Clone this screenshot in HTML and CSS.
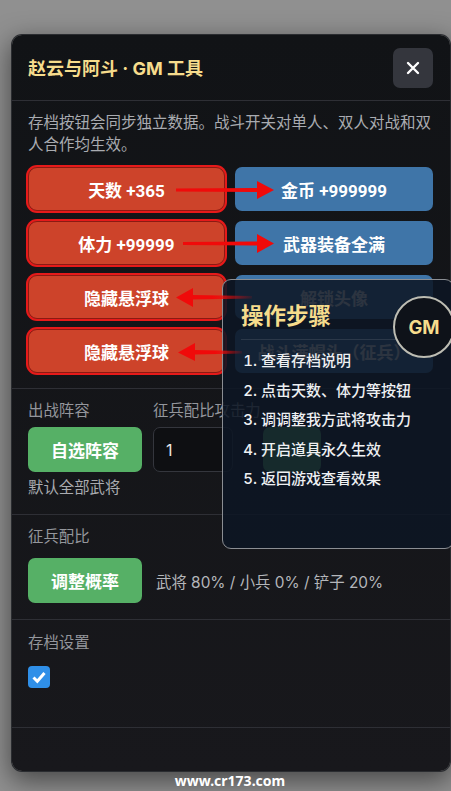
FILE: index.html
```html
<!DOCTYPE html>
<html lang="zh-CN">
<head>
    <meta charset="UTF-8">
    <meta name="viewport" content="width=device-width, initial-scale=1.0">
    <title>GM 工具</title>
    <link rel="stylesheet" href="styles.css">
</head>
<body>

    <div class="modal">
        <div class="modal-header">
            <h2>赵云与阿斗 · GM 工具</h2>
            <button class="close-btn">
                <svg width="14" height="14" viewBox="0 0 14 14"><path d="M2 2 L12 12 M12 2 L2 12" stroke="#fff" stroke-width="2.4" stroke-linecap="round"/></svg>
            </button>
        </div>

        <!-- save buttons -->
        <div class="section section-top">
            <p class="desc">存档按钮会同步独立数据。战斗开关对单人、双人对战和双人合作均生效。</p>
            <div class="btn-grid">
                <button class="btn btn-red">天数 +365</button>
                <button class="btn btn-blue">金币 +999999</button>
                <button class="btn btn-red">体力 +99999</button>
                <button class="btn btn-blue">武器装备全满</button>
                <button class="btn btn-red">隐藏悬浮球</button>
                <button class="btn btn-blue">解锁头像</button>
                <button class="btn btn-red">隐藏悬浮球</button>
                <button class="btn btn-blue">战斗满帽头（征兵）</button>
            </div>
        </div>

        <!-- lineup -->
        <div class="section section-lineup">
            <div class="lineup-row">
                <div class="field field-lineup">
                    <label>出战阵容</label>
                    <button class="btn btn-green">自选阵容</button>
                </div>
                <div class="field">
                    <label>征兵配比攻击力</label>
                    <div class="input-row">
                        <input class="num-input" type="text" value="1">
                        <button class="btn btn-green btn-small"></button>
                    </div>
                </div>
            </div>
            <p class="hint">默认全部武将</p>
        </div>

        <!-- ratio -->
        <div class="section section-ratio">
            <label>征兵配比</label>
            <div class="ratio-row">
                <button class="btn btn-green">调整概率</button>
                <span class="ratio-text">武将 80% / 小兵 0% / 铲子 20%</span>
            </div>
        </div>

        <!-- save settings -->
        <div class="section section-save">
            <label>存档设置</label>
            <span class="checkbox">
                <svg width="16" height="16" viewBox="0 0 16 16"><path d="M2.5 8.5 L6.3 12.2 L13.5 4" fill="none" stroke="#fff" stroke-width="3"/></svg>
            </span>
        </div>

        <div class="modal-footer"></div>
    </div>

    <div class="steps-panel">
        <h3>操作步骤</h3>
        <ol>
            <li>查看存档说明</li>
            <li>点击天数、体力等按钮</li>
            <li>调调整我方武将攻击力</li>
            <li>开启道具永久生效</li>
            <li>返回游戏查看效果</li>
        </ol>
    </div>

    <div class="gm-ball">GM</div>

    <!-- red annotation arrows, the lower two fade out over the panel -->
    <svg class="arrows" width="451" height="791" viewBox="0 0 451 791">
        <defs>
            <linearGradient id="fadeTop" gradientUnits="userSpaceOnUse" x1="212" y1="0" x2="252" y2="0">
                <stop offset="0" stop-color="#f00a0a"/>
                <stop offset="1" stop-color="#f00a0a" stop-opacity="0.1"/>
            </linearGradient>
            <linearGradient id="fadeBottom" gradientUnits="userSpaceOnUse" x1="215" y1="0" x2="242" y2="0">
                <stop offset="0" stop-color="#f00a0a"/>
                <stop offset="1" stop-color="#f00a0a" stop-opacity="0.1"/>
            </linearGradient>
        </defs>
        <path fill="#f00a0a" d="M176 188.500 L257 188 V181 L274 190 L257 199 V192 L176 191.500 Z"/>
        <path fill="#f00a0a" d="M183 242 L257 241.500 V234 L274 243.500 L257 253 V245.500 L183 245 Z"/>
        <path fill="url(#fadeTop)" d="M252 296 L193 295 V288 L176 297.500 L193 307 V299.500 L252 298.500 Z"/>
        <path fill="url(#fadeBottom)" d="M242 351 L195 350 V343 L178 352.500 L195 361 V354.500 L242 353.500 Z"/>
    </svg>

    <div class="watermark">www.cr173.com</div>

</body>
</html>
```

FILE: styles.css
```css
body {
    margin: 0;
    padding: 0;
    width: 451px;
    height: 791px;
    overflow: hidden;
    position: relative;
    background: #909090;
    font-family: Inter, "Noto Sans CJK SC", sans-serif;
    color: #fff;
}

.modal {
    position: absolute;
    top: 35px;
    left: 12px;
    width: 438px;
    height: 736px;
    box-sizing: border-box;
    display: flex;
    flex-direction: column;
    background: linear-gradient(180deg, #111316 0%, #18181c 100%);
    border-radius: 10px;
    box-shadow: 0 0 0 1px #2a2c30, 0 8px 26px 2px rgba(0, 0, 0, 0.5);
}

.modal-header {
    height: 66px;
    box-sizing: border-box;
    padding: 13px 17px 0 16px;
    display: flex;
    justify-content: space-between;
    align-items: flex-start;
    border-bottom: 1px solid #2e2f35;
}

.modal-header h2 {
    margin: 8px 0 0;
    font-size: 18px;
    line-height: 26px;
    font-weight: 700;
    color: #f6dc8c;
}

.close-btn {
    width: 40px;
    height: 40px;
    padding: 0;
    border: none;
    border-radius: 7px;
    background: #34363d;
    display: flex;
    align-items: center;
    justify-content: center;
}

.section {
    border-bottom: 1px solid #2e2f35;
    box-sizing: border-box;
    padding-left: 16px;
    padding-right: 17px;
}

.section-top {
    height: 288px;
    padding-top: 11px;
}

.desc {
    margin: 0 0 11px;
    font-size: 15.500px;
    line-height: 22px;
    color: #a9abb0;
}

.btn-grid {
    display: grid;
    grid-template-columns: 197px 198px;
    grid-auto-rows: 44px;
    column-gap: 10px;
    row-gap: 10px;
}

.btn {
    border: none;
    border-radius: 7px;
    color: #fff;
    font-family: Roboto, "Noto Sans CJK SC", sans-serif;
    font-size: 17px;
    font-weight: 700;
    padding: 0;
}

.btn-red {
    background: #cd432a;
    border: 1px solid #8a1b13;
    border-radius: 9px;
    box-shadow: 0 0 0 2px #e61a1a;
}

.btn-blue {
    background: #3f75a8;
}

.btn-green {
    background: #56b066;
    width: 114px;
    height: 45px;
}

.btn-small {
    width: 58px;
    margin-left: 30px;
}

.section-lineup {
    height: 126px;
    padding-top: 11px;
}

label {
    display: block;
    font-size: 15.400px;
    line-height: 21px;
    color: #94969c;
}

.lineup-row {
    display: flex;
    gap: 11px;
}

.field label {
    margin-bottom: 6px;
}

.input-row {
    display: flex;
}

.num-input {
    width: 80px;
    height: 45px;
    box-sizing: border-box;
    padding: 0 12px;
    border: 1px solid #34363d;
    border-radius: 7px;
    background: #0e0f12;
    color: #e8e8e8;
    font-family: inherit;
    font-size: 16px;
}

.hint {
    margin: 5px 0 0;
    font-size: 15.400px;
    line-height: 21px;
    color: #a9abb0;
}

.section-ratio {
    height: 105px;
    padding-top: 11px;
}

.ratio-row {
    display: flex;
    align-items: center;
    gap: 14px;
    margin-top: 11px;
}

.ratio-text {
    font-size: 15.400px;
    color: #b4b6ba;
}

.section-save {
    height: 108px;
    padding-top: 12px;
}

.checkbox {
    margin-top: 13px;
    display: flex;
    align-items: center;
    justify-content: center;
    width: 22px;
    height: 22px;
    border-radius: 4px;
    background: #2f8fe8;
}

.modal-footer {
    flex: 1;
}

.arrows {
    position: absolute;
    top: 0;
    left: 0;
}

.steps-panel {
    position: absolute;
    top: 279px;
    left: 222px;
    width: 232px;
    height: 270px;
    box-sizing: border-box;
    padding: 16px 18px;
    border: 1px solid #8b8e93;
    border-radius: 9px;
    background: rgba(13, 22, 36, 0.87);
}

.steps-panel h3 {
    margin: 0;
    padding-bottom: 3px;
    font-size: 22.500px;
    line-height: 40px;
    font-weight: 700;
    color: #f6dc8c;
    border-bottom: 1px solid rgba(255, 255, 255, 0.1);
}

.steps-panel ol {
    margin: 6px 0 0;
    padding: 0 0 0 20px;
    font-size: 15px;
    font-weight: 500;
    line-height: 29.500px;
    color: #eef0f2;
}

.gm-ball {
    position: absolute;
    top: 296px;
    left: 393px;
    width: 62px;
    height: 62px;
    box-sizing: border-box;
    border: 2px solid #bdbdb3;
    border-radius: 50%;
    background: #0e1219;
    color: #f6dc8c;
    font-size: 18.500px;
    font-weight: 700;
    display: flex;
    align-items: center;
    justify-content: center;
}

.watermark {
    position: absolute;
    top: 771px;
    left: 0;
    width: 460px;
    text-align: center;
    font-family: "Noto Sans", sans-serif;
    font-size: 14px;
    line-height: 20px;
    font-weight: 700;
    color: #fff;
}
```
